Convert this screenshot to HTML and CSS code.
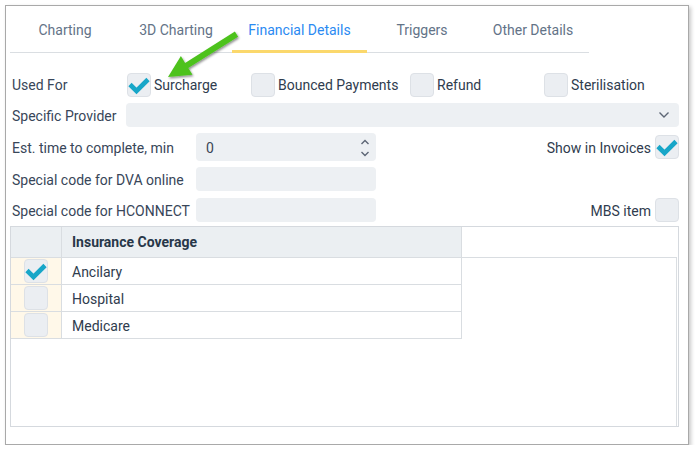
FILE: index.html
```html
<!DOCTYPE html>
<html>
<head>
<meta charset="utf-8">
<link rel="stylesheet" href="styles.css">
</head>
<body>
<div class="frame">
  <div class="tabs">
    <div class="tab w110">Charting</div>
    <div class="tab w112">3D Charting</div>
    <div class="tab active">Financial Details</div>
    <div class="tab w110">Triggers</div>
    <div class="tab w112">Other Details</div>
  </div>

  <div class="form">
    <div class="row">
      <div class="label short">Used For</div>
      <div class="options">
        <label class="opt"><span class="cb checked"><svg viewBox="0 0 24 24"><polyline points="3,11.5 9.5,18 21,6.5"/></svg></span>Surcharge</label>
        <label class="opt"><span class="cb"></span>Bounced Payments</label>
        <label class="opt"><span class="cb"></span>Refund</label>
        <label class="opt"><span class="cb"></span>Sterilisation</label>
      </div>
    </div>

    <div class="row">
      <div class="label short">Specific Provider</div>
      <div class="select">
        <svg class="chev" viewBox="0 0 12 8"><polyline points="1.5,1.5 6,6 10.5,1.5"/></svg>
      </div>
    </div>

    <div class="row tall">
      <div class="label long">Est. time to complete, min</div>
      <div class="input num">
        <span class="val">0</span>
        <span class="spin">
          <svg viewBox="0 0 10 6"><polyline points="1.5,5 5,1.5 8.5,5"/></svg>
          <svg viewBox="0 0 10 6"><polyline points="1.5,1 5,4.5 8.5,1"/></svg>
        </span>
      </div>
      <div class="right">
        <span class="rlabel">Show in Invoices</span>
        <span class="cb checked"><svg viewBox="0 0 24 24"><polyline points="3,11.5 9.5,18 21,6.5"/></svg></span>
      </div>
    </div>

    <div class="row">
      <div class="label long">Special code for DVA online</div>
      <div class="input"></div>
    </div>

    <div class="row">
      <div class="label long">Special code for HCONNECT</div>
      <div class="input"></div>
      <div class="right">
        <span class="rlabel">MBS item</span>
        <span class="cb"></span>
      </div>
    </div>
  </div>

  <div class="grid">
    <div class="ghead">
      <div class="hc ccheck"></div>
      <div class="hc cname">Insurance Coverage</div>
    </div>
    <div class="gbody">
      <div class="grow">
        <div class="gc ccheck"><span class="cb checked"><svg viewBox="0 0 24 24"><polyline points="3,11.5 9.5,18 21,6.5"/></svg></span></div>
        <div class="gc cname">Ancilary</div>
      </div>
      <div class="grow">
        <div class="gc ccheck"><span class="cb"></span></div>
        <div class="gc cname">Hospital</div>
      </div>
      <div class="grow">
        <div class="gc ccheck"><span class="cb"></span></div>
        <div class="gc cname">Medicare</div>
      </div>
    </div>
  </div>
</div>

<svg class="arrow" width="695" height="452" viewBox="0 0 695 452">
  <defs>
    <filter id="sh" x="-20%" y="-20%" width="140%" height="140%">
      <feDropShadow dx="1" dy="1.5" stdDeviation="1.2" flood-color="#000" flood-opacity="0.45"/>
    </filter>
  </defs>
  <polygon filter="url(#sh)" fill="#4dc21f" points="234.9,31.6 238.1,36.8 188.3,68 192.5,74.8 168,77 180.9,56.1 185.1,62.9"/>
</svg>
</body>
</html>
```

FILE: styles.css
```css
* { box-sizing: border-box; }

body {
  margin: 0;
  background: #ffffff;
  font-family: Roboto, "Liberation Sans", sans-serif;
  font-size: 14px;
  color: #384659;
}

.frame {
  margin: 5px 0 0 5px;
  width: 684px;
  height: 440px;
  border: 1px solid #a9a9a9;
  box-shadow: 2px 2px 4px rgba(0, 0, 0, 0.22);
  padding: 0 9px 0 4px;
  background: #fff;
}

.tabs {
  display: flex;
  width: 579px;
  height: 47px;
  border-bottom: 1px solid #dadee2;
}

.tab {
  height: 47px;
  display: flex;
  align-items: center;
  justify-content: center;
  padding-top: 3px;
  border-bottom: 3px solid transparent;
  margin-bottom: -1px;
  color: #637387;
  white-space: nowrap;
}

.w110 { width: 110px; }
.w112 { width: 112px; }

.tab.active {
  width: 135px;
  color: #2b8af2;
  border-bottom-color: #fbd86c;
}

.form {
  padding: 19px 0 0 2px;
  display: flex;
  flex-direction: column;
  gap: 7px;
}

.row {
  display: flex;
  align-items: center;
  height: 24px;
}

.row.tall {
  height: 28px;
  margin: -1px 0;
}

.label { white-space: nowrap; padding-top: 1px; }
.label.short { width: 114px; }
.label.long { width: 184px; }

.options {
  display: grid;
  grid-template-columns: 124px 159px 134px auto;
  padding-left: 1px;
}

.opt {
  display: flex;
  align-items: center;
  gap: 3px;
  color: #2f3c4e;
  padding-top: 1px;
}

.cb {
  display: inline-flex;
  align-items: center;
  justify-content: center;
  width: 24px;
  height: 24px;
  flex: none;
  background: #ebeef2;
  border: 1px solid #dde1e6;
  border-radius: 4px;
}

.cb svg {
  width: 24px;
  height: 24px;
  margin: -1px;
}

.cb svg polyline {
  fill: none;
  stroke: #17a6c8;
  stroke-width: 4.6;
  stroke-linejoin: miter;
  stroke-linecap: butt;
}

.select {
  flex: 1;
  height: 24px;
  background: #edf0f3;
  border-radius: 4px;
  display: flex;
  align-items: center;
  justify-content: flex-end;
  padding-right: 9px;
}

.chev {
  width: 12px;
  height: 8px;
}

.chev polyline,
.spin polyline {
  fill: none;
  stroke: #5d6675;
  stroke-width: 1.4;
}

.input {
  width: 180px;
  height: 24px;
  background: #edf0f3;
  border-radius: 4px;
}

.input.num {
  height: 28px;
  display: flex;
  align-items: center;
  justify-content: space-between;
  padding: 1px 6px 0 10px;
}

.val { color: #3a4656; }

.spin {
  display: flex;
  flex-direction: column;
  gap: 6px;
}

.spin svg {
  width: 10px;
  height: 6px;
  display: block;
}

.right {
  margin-left: auto;
  display: flex;
  align-items: center;
  gap: 4px;
  color: #2f3c4e;
}

.rlabel { padding-top: 1px; }

.grid {
  margin-top: 4px;
  width: 669px;
  height: 201px;
  border: 1px solid #d5d9de;
  display: flex;
  flex-direction: column;
}

.ghead {
  display: flex;
  height: 31px;
  border-bottom: 1px solid #d9dde1;
  margin-right: 1px;
}

.hc {
  background: #ebeff2;
  border-right: 1px solid #d9dde1;
  display: flex;
  align-items: center;
}

.ccheck { width: 51px; justify-content: center; }
.cname { width: 400px; padding-left: 10px; }

.hc.cname {
  font-size: 14px;
  font-weight: 700;
  color: #283749;
}

.gbody {
  flex: 1;
  margin-right: 1px;
  border-right: 1px solid #dadee2;
}

.grow {
  display: flex;
  height: 27px;
  width: 451px;
  border-bottom: 1px solid #d9dde1;
}

.gc {
  border-right: 1px solid #d9dde1;
  display: flex;
  align-items: center;
  color: #2f3c4e;
}

.gc.cname { padding-top: 1px; }

.gc.ccheck { background: #fff8e9; }

.arrow {
  position: absolute;
  left: 0;
  top: 0;
  pointer-events: none;
}
```
